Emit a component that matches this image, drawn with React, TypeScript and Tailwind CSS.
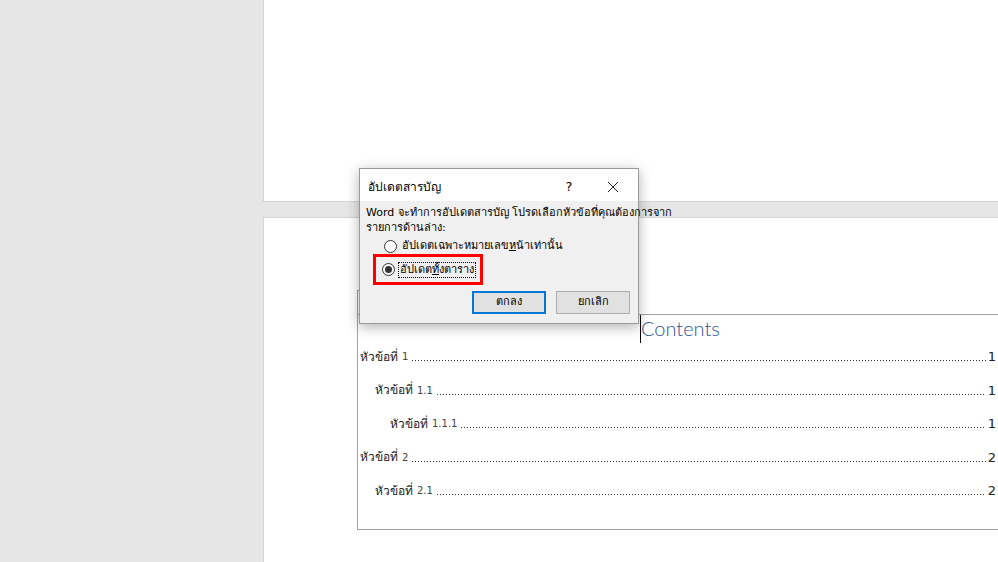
import type { ReactNode } from 'react';

const thai = "font-['Tahoma','DejaVu_Sans','Noto_Sans',sans-serif]";

const entries = [
  { label: 'หัวข้อที่', num: '1', page: '1', indent: 'pl-[2px]' },
  { label: 'หัวข้อที่', num: '1.1', page: '1', indent: 'pl-[17px]' },
  { label: 'หัวข้อที่', num: '1.1.1', page: '1', indent: 'pl-[32px]' },
  { label: 'หัวข้อที่', num: '2', page: '2', indent: 'pl-[2px]' },
  { label: 'หัวข้อที่', num: '2.1', page: '2', indent: 'pl-[17px]' },
];

function Radio({ checked }: { checked?: boolean }) {
  return (
    <span className="w-[13px] h-[13px] rounded-full border border-[#333] bg-white flex items-center justify-center shrink-0">
      {checked && <span className="w-[7px] h-[7px] rounded-full bg-[#333]" />}
    </span>
  );
}

function Btn({ children, primary }: { children: ReactNode; primary?: boolean }) {
  return (
    <button
      className={
        primary
          ? 'w-[74px] h-[23px] bg-[#e1e1e1] border-2 border-[#0078d7] text-[11px] text-black flex items-center justify-center'
          : 'w-[74px] h-[23px] bg-[#e1e1e1] border border-[#adadad] text-[11px] text-black flex items-center justify-center'
      }
    >
      {children}
    </button>
  );
}

export default function App() {
  return (
    <div className={`relative w-[998px] h-[562px] overflow-hidden flex bg-[#e6e6e6] ${thai}`}>
      {/* gray side */}
      <div className="w-[263px] shrink-0" />

      {/* pages */}
      <div className="flex-1 flex flex-col">
        <div className="h-[202px] bg-white border-l border-b border-[#d4d4d4]" />
        <div className="h-[15px]" />
        <div className="flex-1 bg-white border-l border-t border-[#d4d4d4] pl-[93px] pt-[72px]">
          {/* TOC content control */}
          <div className="w-[700px]">
            <div className="w-[110px] h-[24px] border-l border-t border-[#a0a0a0]" />
            <div className="border-l border-t border-b border-[#a0a0a0] h-[216px] flex flex-col">
              <div className="h-[25px] pl-[282px] flex items-start">
                <span className="w-px h-[28px] bg-black" />
                <span className="text-[20px] leading-[26px] text-[#2f5496] font-['Lato','Open_Sans',sans-serif] font-light">
                  Contents
                </span>
              </div>
              <div className="w-[638px]">
                {entries.map((e, i) => (
                  <div key={i} className={`h-[33.5px] flex items-center text-[12px] text-[#222] ${e.indent}`}>
                    <span className="whitespace-nowrap">{e.label}</span>
                    <span className="ml-[4px] text-[10px] text-[#444] whitespace-nowrap">{e.num}</span>
                    <div className="flex-1 self-center h-px mt-[8px] ml-[4px] mr-[2px] bg-[linear-gradient(to_right,#333_1px,transparent_1px)] bg-[length:3px_1px] bg-repeat-x" />
                    <span className="text-[13px] text-[#222] font-['DejaVu_Sans',sans-serif]">{e.page}</span>
                  </div>
                ))}
              </div>
            </div>
          </div>
        </div>
      </div>

      {/* Update Table of Contents dialog */}
      <div className="absolute left-[359px] top-[168px] w-[280px] h-[156px] bg-[#f0f0f0] border border-[#9a9a9a] shadow-[0_3px_12px_rgba(0,0,0,0.3)] flex flex-col text-[11px] text-black">
        <div className="h-[32px] bg-white flex items-center pl-[8px] pt-[3px]">
          <span className="flex-1 text-[12px]">อัปเดตสารบัญ</span>
          <span className="w-[20px] text-center text-[13px] font-['DejaVu_Sans',sans-serif] mr-[28px]">?</span>
          <svg width="12" height="12" viewBox="0 0 12 12" className="mr-[19px]">
            <path d="M1 1 L11 11 M11 1 L1 11" stroke="#222" strokeWidth="1" />
          </svg>
        </div>
        <div className="flex-1 flex flex-col px-[6px] pt-[4px]">
          <div className="text-[11px] leading-[15px] whitespace-nowrap">
            Word จะทำการอัปเดตสารบัญ โปรดเลือกหัวข้อที่คุณต้องการจาก
            <br />
            รายการด้านล่าง:
          </div>
          <div className="flex items-center gap-[5px] ml-[18px] mt-[2px] h-[18px]">
            <Radio />
            <span>
              อัปเดตเฉพาะหมายเลข<span className="underline">ห</span>น้าเท่านั้น
            </span>
          </div>
          <div className="flex items-center ml-[7px] mt-[-1px] w-[110px] h-[31px] border-[3px] border-[#ff0000] pl-[6px] gap-[3px]">
            <Radio checked />
            <span className="border border-dotted border-black px-[1px] leading-[14px]">
              อัปเดต<span className="underline">ทั้</span>งตาราง
            </span>
          </div>
          <div className="flex justify-end gap-[10px] mt-[6px] mr-[2px]">
            <Btn primary>ตกลง</Btn>
            <Btn>ยกเลิก</Btn>
          </div>
        </div>
      </div>
    </div>
  );
}
